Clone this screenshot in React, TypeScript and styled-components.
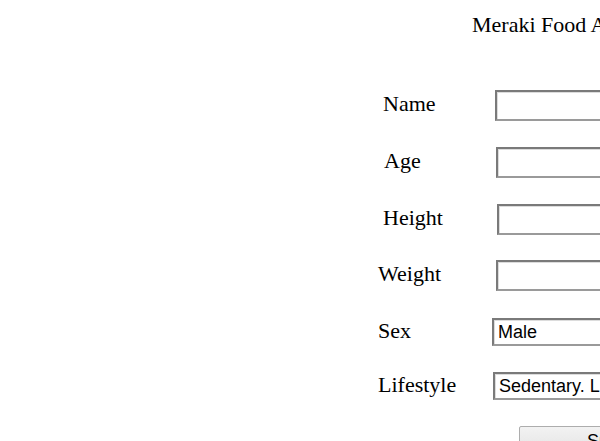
import React from "react";
import styled, { createGlobalStyle } from "styled-components";

const GlobalStyle = createGlobalStyle`
  html, body {
    margin: 0;
    padding: 0;
    overflow: hidden;
    background: #ffffff;
  }
  body {
    font-family: "Liberation Serif", "Times New Roman", serif;
    color: #000000;
  }
`;

const Page = styled.main`
  width: 600px;
  height: 441px;
  overflow: hidden;
`;

const Title = styled.h1`
  margin: 12px 0 0 472px;
  font-size: 22px;
  font-weight: normal;
  line-height: 25px;
  white-space: nowrap;
`;

const Form = styled.form`
  display: flex;
  flex-direction: column;
  margin: 53px 0 0 378px;
`;

const Row = styled.div<{ $h: number }>`
  display: flex;
  align-items: flex-start;
  height: ${(p) => p.$h}px;
  white-space: nowrap;
`;

const Label = styled.label<{ $x: number; $w: number; $ctl: number }>`
  display: flex;
  align-items: center;
  box-sizing: border-box;
  margin-left: ${(p) => p.$x}px;
  width: ${(p) => p.$w}px;
  height: ${(p) => p.$ctl}px;
  padding-bottom: 3px;
  font-size: 22px;
  flex-shrink: 0;
`;

const TextInput = styled.input`
  box-sizing: border-box;
  width: 220px;
  height: 31px;
  border: 2px solid #7a7a7a;
  border-right-color: #b8b8b8;
  border-bottom-color: #9a9a9a;
  box-shadow: inset 1px 1px 0 #dcdcdc;
  background: #ffffff;
  padding: 0 4px;
  font: 18px "Liberation Sans", Arial, sans-serif;
  flex-shrink: 0;
`;

const Select = styled.select`
  box-sizing: border-box;
  appearance: none;
  width: 260px;
  height: 28px;
  border: 2px solid #7a7a7a;
  border-right-color: #b8b8b8;
  border-bottom-color: #9a9a9a;
  box-shadow: inset 1px 1px 0 #dcdcdc;
  background: #ffffff;
  padding: 0 0 0 4px;
  font: 18px "Liberation Sans", Arial, sans-serif;
  color: #000000;
  flex-shrink: 0;
`;

const SubmitButton = styled.button`
  margin-left: 141px;
  width: 192px;
  height: 30px;
  border: 1px solid #adadad;
  border-radius: 2px;
  background: linear-gradient(#f2f2f2, #e3e3e3);
  font: 18px "Liberation Sans", Arial, sans-serif;
  color: #000000;
  flex-shrink: 0;
`;

const fields = [
  { name: "Name", x: 5, w: 112, h: 57 },
  { name: "Age", x: 6, w: 112, h: 57 },
  { name: "Height", x: 5, w: 114, h: 56 },
  { name: "Weight", x: 0, w: 118, h: 58 },
];

export default function App() {
  return (
    <Page>
      <GlobalStyle />
      <Title>Meraki Food App</Title>
      <Form onSubmit={(e) => e.preventDefault()}>
        {fields.map((f) => (
          <Row key={f.name} $h={f.h}>
            <Label $x={f.x} $w={f.w} $ctl={31}>
              {f.name}
            </Label>
            <TextInput type="text" />
          </Row>
        ))}
        <Row $h={54}>
          <Label $x={0} $w={114} $ctl={28}>
            Sex
          </Label>
          <Select defaultValue="male">
            <option value="male">Male</option>
            <option value="female">Female</option>
          </Select>
        </Row>
        <Row $h={54}>
          <Label $x={0} $w={115} $ctl={28}>
            Lifestyle
          </Label>
          <Select defaultValue="sedentary">
            <option value="sedentary">Sedentary. Little or no exercise</option>
            <option value="light">Lightly active</option>
            <option value="moderate">Moderately active</option>
            <option value="very">Very active</option>
          </Select>
        </Row>
        <Row $h={40}>
          <SubmitButton type="submit">Submit</SubmitButton>
        </Row>
      </Form>
    </Page>
  );
}
